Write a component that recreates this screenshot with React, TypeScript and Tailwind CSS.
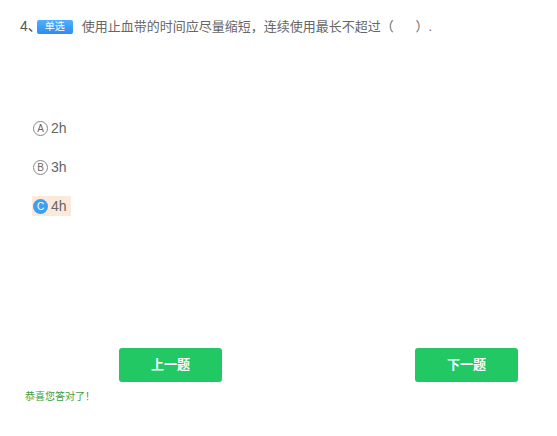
import React from 'react';

const options = [
  { key: 'A', text: '2h' },
  { key: 'B', text: '3h' },
  { key: 'C', text: '4h' },
];

const font = { fontFamily: '"Liberation Sans", "Noto Sans CJK SC", sans-serif' };

export default function App() {
  const selected = 'C';

  return (
    <div className="w-[557px] h-[436px] bg-white text-[#555]" style={font}>
      {/* Question title */}
      <div className="flex items-center pt-[18px] pl-[20px] h-[35px]">
        <span className="text-[14px] text-[#555]">4、</span>
        <span className="ml-[-5px] px-[8px] h-[14px] leading-[14px] rounded-[2px] bg-gradient-to-b from-[#4fb0ff] to-[#2b8df0] text-white text-[10px]">
          单选
        </span>
        <span className="ml-[9px] text-[13px] text-[#666] whitespace-pre">
          使用止血带的时间应尽量缩短，连续使用最长不超过（      ）.
        </span>
      </div>

      {/* Options */}
      <div className="flex flex-col gap-[19px] pl-[32px] mt-[83px]">
        {options.map((o) => {
          const active = o.key === selected;
          return (
            <div key={o.key} className="h-[20px] flex">
              <div className={`flex items-center h-[20px] pl-[1px] pr-[4px] ${active ? 'bg-[#fde9da]' : ''}`}>
                {active ? (
                  <span className="w-[15px] h-[15px] rounded-full bg-[#3d9ff2] text-white text-[10px] flex items-center justify-center">
                    {o.key}
                  </span>
                ) : (
                  <span className="w-[15px] h-[15px] rounded-full border border-[#888] text-[#666] text-[10px] flex items-center justify-center">
                    {o.key}
                  </span>
                )}
                <span className="ml-[3px] text-[14px] text-[#666]">{o.text}</span>
              </div>
            </div>
          );
        })}
      </div>

      {/* Navigation buttons */}
      <div className="flex justify-between pl-[119px] pr-[39px] mt-[132px]">
        <button className="w-[103px] h-[34px] rounded-[3px] bg-[#21c863] text-white text-[13px] font-bold">
          上一题
        </button>
        <button className="w-[103px] h-[34px] rounded-[3px] bg-[#21c863] text-white text-[13px] font-bold">
          下一题
        </button>
      </div>

      <div className="pl-[25px] mt-[7px] text-[10px] text-[#3c9d3c]">恭喜您答对了！</div>
    </div>
  );
}
